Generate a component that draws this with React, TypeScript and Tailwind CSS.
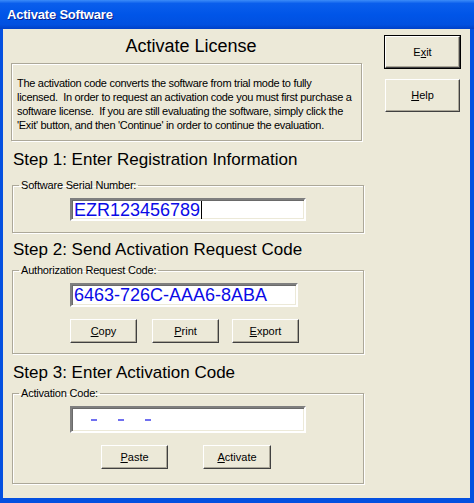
import type { ReactNode } from "react";

const raised =
  "border border-t-white border-l-white border-b-[#404040] border-r-[#404040] shadow-[inset_-1px_-1px_0_#ACA899]";
const sunken =
  "border-2 border-t-[#7F7F7F] border-l-[#7F7F7F] border-b-white border-r-white shadow-[inset_1px_1px_0_#6A6A6A,inset_-1px_-1px_0_#ECE9D8] bg-white";

function Btn({
  children,
  className = "",
  isDefault = false,
}: {
  children: ReactNode;
  className?: string;
  isDefault?: boolean;
}) {
  return (
    <button
      type="button"
      className={`${isDefault ? "outline outline-1 outline-black" : ""} ${raised} flex items-center justify-center bg-[#ECE9D8] text-[11px] text-black ${className}`}
    >
      {children}
    </button>
  );
}

function Group({
  label,
  className = "",
  children,
}: {
  label: string;
  className?: string;
  children: ReactNode;
}) {
  return (
    <fieldset
      className={`w-[352px] border border-[#ACA899] shadow-[inset_1px_1px_0_white,1px_1px_0_white] ${className}`}
    >
      <legend className="ml-[6px] px-[2px] text-[11px] leading-[13px] tracking-[-0.2px] text-black">
        {label}
      </legend>
      {children}
    </fieldset>
  );
}

function StepHeading({ text, className }: { text: string; className: string }) {
  return (
    <div className={className}>
      <h2 className="pl-[1px] text-[17px] leading-[20px] text-black">{text}</h2>
    </div>
  );
}

export default function App() {
  return (
    <div className="flex h-[503px] w-[474px] flex-col overflow-hidden bg-[#0450E0] font-['Liberation_Sans',Arial,sans-serif]">
      <div className="flex h-[29px] items-center bg-[linear-gradient(to_bottom,#3C8CF8_0%,#0A5EEC_12%,#0055E8_50%,#0150E0_85%,#0040C8_100%)] pl-[7px]">
        <span className="text-[13px] font-bold tracking-[-0.2px] text-white [text-shadow:1px_1px_0_#0A1E8A]">
          Activate Software
        </span>
      </div>

      <div className="mb-[5px] ml-[3px] mr-[4px] flex flex-1 bg-[#ECE9D8]">
        <div className="w-[367px] pl-[9px]">
          <div className="flex h-[34px] items-center justify-center">
            <h1 className="text-[18px] leading-[20px] text-black">Activate License</h1>
          </div>

          <div className="-ml-[1px] h-[78px] w-[351px] border border-[#ACA899] pl-[5px] pt-[12px] shadow-[inset_1px_1px_0_white,1px_1px_0_white]">
            <p className="whitespace-nowrap text-[11px] leading-[14px] tracking-[-0.3px] text-black">
              The activation code converts the software from trial mode to fully
              <br />
              licensed.&nbsp; In order to request an activation code you must first purchase a
              <br />
              software license.&nbsp; If you are still evaluating the software, simply click the
              <br />
              'Exit' button, and then 'Continue' in order to continue the evaluation.
            </p>
          </div>

          <StepHeading
            text="Step 1: Enter Registration Information"
            className="h-[38px] pt-[9px]"
          />

          <Group label="Software Serial Number:" className="h-[54px]">
            <div
              className={`${sunken} ml-[57px] mt-[6px] flex h-[23px] w-[236px] items-center pl-[2px]`}
            >
              <span className="text-[18px] leading-none text-[#0A0AE6]">EZR123456789</span>
              <span className="ml-[1px] h-[18px] w-[1px] bg-black" />
            </div>
          </Group>

          <StepHeading text="Step 2: Send Activation Request Code" className="h-[31px] pt-[7px]" />

          <Group label="Authorization Request Code:" className="h-[90px]">
            <div
              className={`${sunken} ml-[57px] mt-[6px] flex h-[24px] w-[228px] items-center pl-[2px]`}
            >
              <span className="text-[18px] leading-none text-[#0A0AE6]">6463-726C-AAA6-8ABA</span>
            </div>
            <div className="ml-[57px] mt-[12px] flex">
              <Btn className="h-[24px] w-[67px]">
                <span>
                  <u>C</u>opy
                </span>
              </Btn>
              <Btn className="ml-[15px] h-[24px] w-[67px]">
                <span>
                  <u>P</u>rint
                </span>
              </Btn>
              <Btn className="ml-[13px] h-[24px] w-[67px]">
                <span>
                  <u>E</u>xport
                </span>
              </Btn>
            </div>
          </Group>

          <StepHeading text="Step 3: Enter Activation Code" className="h-[33px] pt-[9px]" />

          <Group label="Activation Code:" className="h-[97px]">
            <div
              className={`${sunken} ml-[57px] mt-[6px] flex h-[27px] w-[236px] items-center gap-[21px] pl-[19px]`}
            >
              <span className="h-[2px] w-[6px] bg-[#7070F0]" />
              <span className="h-[2px] w-[6px] bg-[#7070F0]" />
              <span className="h-[2px] w-[6px] bg-[#7070F0]" />
            </div>
            <div className="ml-[88px] mt-[12px] flex">
              <Btn className="h-[24px] w-[67px]">
                <span>
                  <u>P</u>aste
                </span>
              </Btn>
              <Btn className="ml-[35px] h-[24px] w-[68px]">
                <span>
                  <u>A</u>ctivate
                </span>
              </Btn>
            </div>
          </Group>
        </div>

        <div className="flex flex-col pl-[15px] pt-[7px]">
          <Btn isDefault className="h-[32px] w-[75px]">
            <span>
              E<u>x</u>it
            </span>
          </Btn>
          <Btn className="mt-[11px] h-[33px] w-[75px]">
            <span>
              <u>H</u>elp
            </span>
          </Btn>
        </div>
      </div>
    </div>
  );
}
